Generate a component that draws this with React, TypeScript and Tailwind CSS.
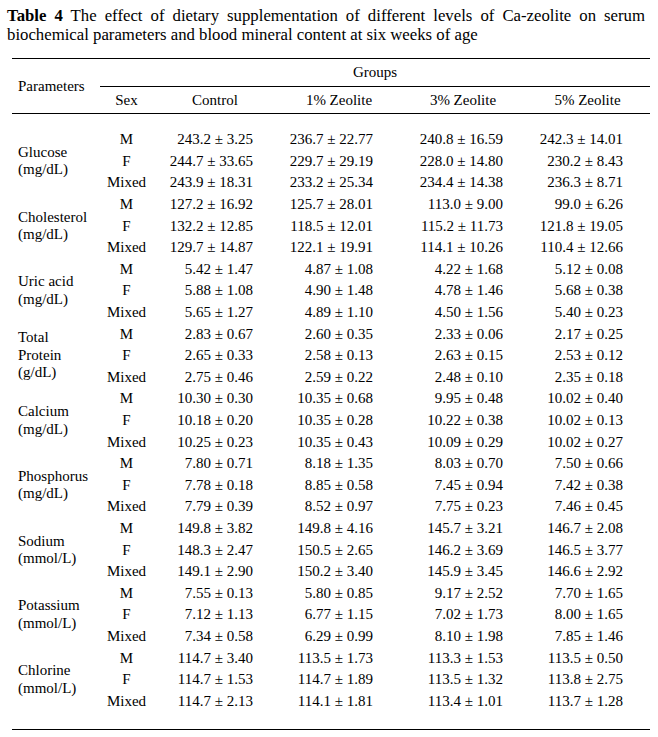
const groups = [
  {
    label: ['Glucose', '(mg/dL)'],
    rows: [
      ['M', '243.2 ± 3.25', '236.7 ± 22.77', '240.8 ± 16.59', '242.3 ± 14.01'],
      ['F', '244.7 ± 33.65', '229.7 ± 29.19', '228.0 ± 14.80', '230.2 ± 8.43'],
      ['Mixed', '243.9 ± 18.31', '233.2 ± 25.34', '234.4 ± 14.38', '236.3 ± 8.71'],
    ],
  },
  {
    label: ['Cholesterol', '(mg/dL)'],
    rows: [
      ['M', '127.2 ± 16.92', '125.7 ± 28.01', '113.0 ± 9.00', '99.0 ± 6.26'],
      ['F', '132.2 ± 12.85', '118.5 ± 12.01', '115.2 ± 11.73', '121.8 ± 19.05'],
      ['Mixed', '129.7 ± 14.87', '122.1 ± 19.91', '114.1 ± 10.26', '110.4 ± 12.66'],
    ],
  },
  {
    label: ['Uric acid', '(mg/dL)'],
    rows: [
      ['M', '5.42 ± 1.47', '4.87 ± 1.08', '4.22 ± 1.68', '5.12 ± 0.08'],
      ['F', '5.88 ± 1.08', '4.90 ± 1.48', '4.78 ± 1.46', '5.68 ± 0.38'],
      ['Mixed', '5.65 ± 1.27', '4.89 ± 1.10', '4.50 ± 1.56', '5.40 ± 0.23'],
    ],
  },
  {
    label: ['Total', 'Protein', '(g/dL)'],
    rows: [
      ['M', '2.83 ± 0.67', '2.60 ± 0.35', '2.33 ± 0.06', '2.17 ± 0.25'],
      ['F', '2.65 ± 0.33', '2.58 ± 0.13', '2.63 ± 0.15', '2.53 ± 0.12'],
      ['Mixed', '2.75 ± 0.46', '2.59 ± 0.22', '2.48 ± 0.10', '2.35 ± 0.18'],
    ],
  },
  {
    label: ['Calcium', '(mg/dL)'],
    rows: [
      ['M', '10.30 ± 0.30', '10.35 ± 0.68', '9.95 ± 0.48', '10.02 ± 0.40'],
      ['F', '10.18 ± 0.20', '10.35 ± 0.28', '10.22 ± 0.38', '10.02 ± 0.13'],
      ['Mixed', '10.25 ± 0.23', '10.35 ± 0.43', '10.09 ± 0.29', '10.02 ± 0.27'],
    ],
  },
  {
    label: ['Phosphorus', '(mg/dL)'],
    rows: [
      ['M', '7.80 ± 0.71', '8.18 ± 1.35', '8.03 ± 0.70', '7.50 ± 0.66'],
      ['F', '7.78 ± 0.18', '8.85 ± 0.58', '7.45 ± 0.94', '7.42 ± 0.38'],
      ['Mixed', '7.79 ± 0.39', '8.52 ± 0.97', '7.75 ± 0.23', '7.46 ± 0.45'],
    ],
  },
  {
    label: ['Sodium', '(mmol/L)'],
    rows: [
      ['M', '149.8 ± 3.82', '149.8 ± 4.16', '145.7 ± 3.21', '146.7 ± 2.08'],
      ['F', '148.3 ± 2.47', '150.5 ± 2.65', '146.2 ± 3.69', '146.5 ± 3.77'],
      ['Mixed', '149.1 ± 2.90', '150.2 ± 3.40', '145.9 ± 3.45', '146.6 ± 2.92'],
    ],
  },
  {
    label: ['Potassium', '(mmol/L)'],
    rows: [
      ['M', '7.55 ± 0.13', '5.80 ± 0.85', '9.17 ± 2.52', '7.70 ± 1.65'],
      ['F', '7.12 ± 1.13', '6.77 ± 1.15', '7.02 ± 1.73', '8.00 ± 1.65'],
      ['Mixed', '7.34 ± 0.58', '6.29 ± 0.99', '8.10 ± 1.98', '7.85 ± 1.46'],
    ],
  },
  {
    label: ['Chlorine', '(mmol/L)'],
    rows: [
      ['M', '114.7 ± 3.40', '113.5 ± 1.73', '113.3 ± 1.53', '113.5 ± 0.50'],
      ['F', '114.7 ± 1.53', '114.7 ± 1.89', '113.5 ± 1.32', '113.8 ± 2.75'],
      ['Mixed', '114.7 ± 2.13', '114.1 ± 1.81', '113.4 ± 1.01', '113.7 ± 1.28'],
    ],
  },
];

// right padding per data column (Control, 1%, 3%, 5%)
const padRight = ['pr-[24px]', 'pr-[28px]', 'pr-[22px]', 'pr-[27px]'];

export default function App() {
  return (
    <div className="w-[658px] h-[737px] bg-white text-black font-['Liberation_Serif','Times_New_Roman',serif]">
      {/* caption */}
      <p className="pt-[6px] ml-[7px] w-[638px] text-[16.75px] leading-[19px] text-justify">
        <b>Table 4</b> The effect of dietary supplementation of different levels of Ca-zeolite on serum
        biochemical parameters and blood mineral content at six weeks of age
      </p>

      <table className="mt-[14px] ml-[12px] w-[638px] table-fixed border-collapse text-[15px]">
        <colgroup>
          <col className="w-[88px]" />
          <col className="w-[53px]" />
          <col className="w-[124px]" />
          <col className="w-[124px]" />
          <col className="w-[124px]" />
          <col className="w-[125px]" />
        </colgroup>
        <thead>
          <tr className="border-t border-black">
            <th rowSpan={2} className="pl-[6px] text-left font-normal align-middle">
              Parameters
            </th>
            <th colSpan={5} className="h-[28px] border-b border-black font-normal">
              Groups
            </th>
          </tr>
          <tr className="border-b border-black">
            <th className="h-[27px] font-normal">Sex</th>
            <th className="font-normal">Control</th>
            <th className="font-normal">1% Zeolite</th>
            <th className="font-normal">3% Zeolite</th>
            <th className="font-normal">5% Zeolite</th>
          </tr>
        </thead>
        <tbody>
          <tr>
            <td colSpan={6} className="h-[15.5px]" />
          </tr>
          {groups.map((g) =>
            g.rows.map((r, i) => (
              <tr key={g.label[0] + r[0]} className="h-[21.6px]">
                {i === 0 && (
                  <td rowSpan={3} className="pl-[6px] align-middle leading-[17.5px]">
                    {g.label.map((l) => (
                      <div key={l}>{l}</div>
                    ))}
                  </td>
                )}
                <td className="text-center leading-none">{r[0]}</td>
                {r.slice(1).map((v, j) => (
                  <td key={j} className={`text-right leading-none whitespace-nowrap ${padRight[j]}`}>
                    {v}
                  </td>
                ))}
              </tr>
            ))
          )}
          <tr className="border-b border-black">
            <td colSpan={6} className="h-[17px]" />
          </tr>
        </tbody>
      </table>
    </div>
  );
}
